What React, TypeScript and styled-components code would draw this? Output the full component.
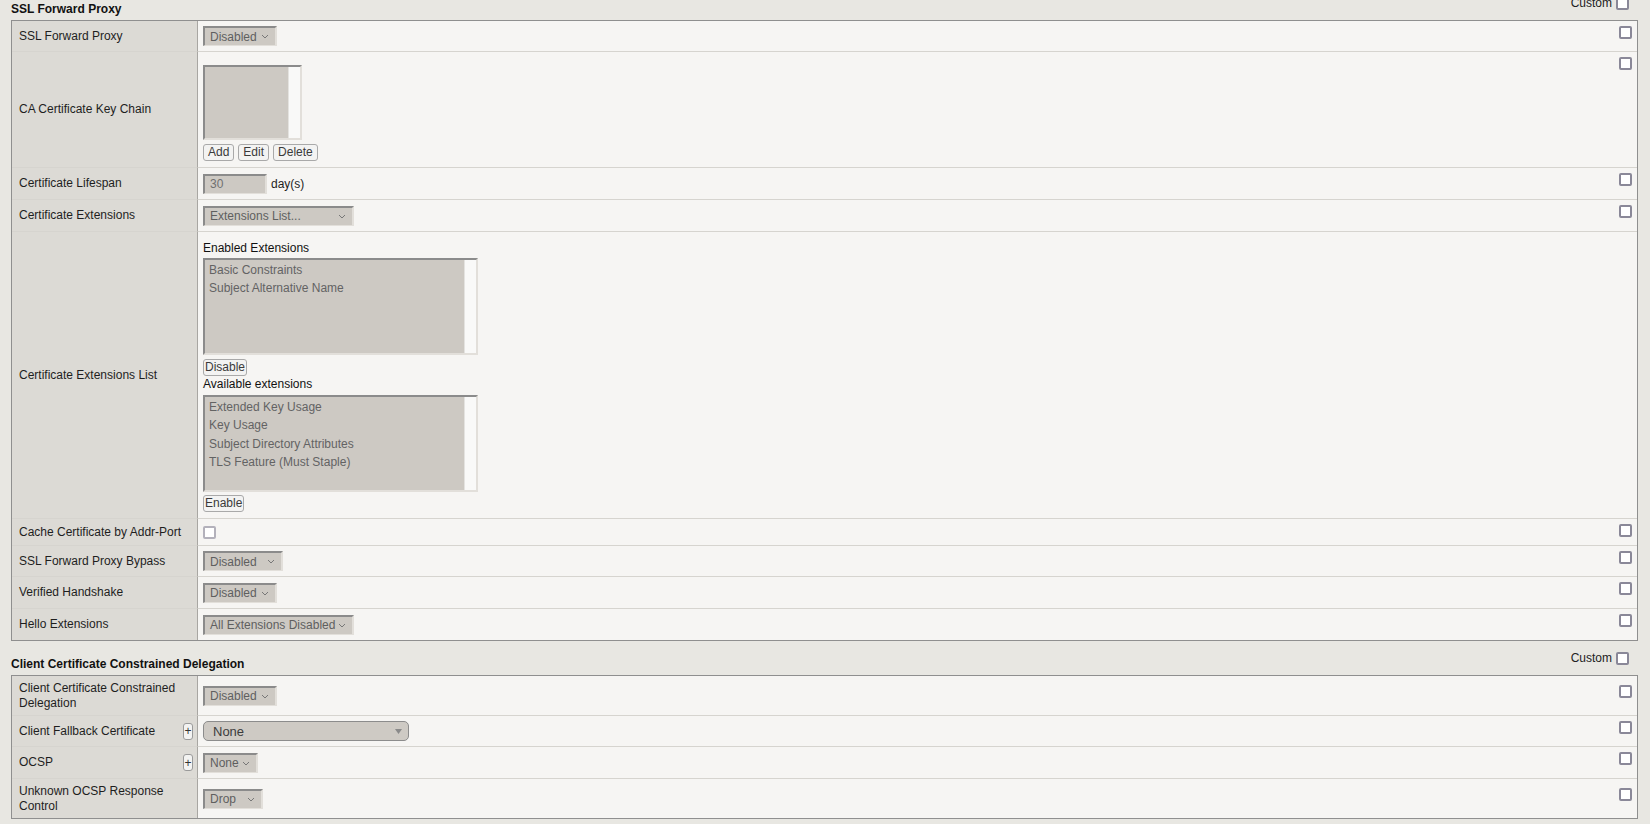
import React from "react";
import styled, { createGlobalStyle } from "styled-components";

const Global = createGlobalStyle`
  html, body { margin: 0; padding: 0; background: #e8e7e2; }
  body {
    font-family: "Liberation Sans", Arial, sans-serif;
    font-size: 12px;
    color: #1e1e1e;
    overflow: hidden;
  }
  * { box-sizing: border-box; }
`;

const Page = styled.div`
  padding: 0 12px 0 11px;
`;

const SectionHeader = styled.div<{ $first?: boolean }>`
  display: flex;
  justify-content: space-between;
  height: 34px;
  margin-top: ${(p) => (p.$first ? "-14px" : "0")};
`;

const SectionTitle = styled.h2`
  margin: 0 0 4px 0;
  align-self: flex-end;
  font-size: 12px;
  font-weight: bold;
  line-height: 14px;
  color: #111;
`;

const CustomToggle = styled.label`
  display: flex;
  align-items: center;
  gap: 4px;
  height: 14px;
  margin: 10px 9px 0 0;
  color: #222;
  line-height: 14px;
`;

const Table = styled.table`
  width: 100%;
  border-collapse: separate;
  border-spacing: 0;
  table-layout: fixed;
  border: 1px solid #8f8f8f;
  background: #f6f5f3;
`;

const Row = styled.tr<{ $h: number }>`
  height: ${(p) => p.$h}px;
  &:not(:first-child) > td {
    border-top: 1px solid #d6d4cf;
  }
`;

const LabelCell = styled.td`
  width: 186px;
  padding: 0 4px 0 7px;
  background: #dcdad5;
  border-right: 1px solid #a8a6a2;
  vertical-align: middle;
  line-height: 14.5px;
  color: #1e1e1e;
`;

const LabelInner = styled.div`
  display: flex;
  align-items: center;
  justify-content: space-between;
`;

const ValueCell = styled.td<{ $top?: number }>`
  padding: ${(p) => (p.$top !== undefined ? `${p.$top}px` : "0")} 5px 0 5px;
  vertical-align: ${(p) => (p.$top !== undefined ? "top" : "middle")};
`;

const CheckCell = styled.td<{ $tall?: boolean }>`
  width: 30px;
  padding: ${(p) => (p.$tall ? "9px" : "5px")} 5px 0 0;
  vertical-align: top;
`;

const CheckBox = styled.input.attrs({ type: "checkbox" })<{ $light?: boolean }>`
  appearance: none;
  display: block;
  width: 13px;
  height: 13px;
  margin: 0 0 0 ${(p) => (p.$light ? "0" : "auto")};
  border: 2px solid ${(p) => (p.$light ? "#b3b1bb" : "#8a8898")};
  border-radius: 2px;
  background: #fff;
`;

const Select = styled.div<{ $w: number }>`
  display: inline-flex;
  align-items: center;
  justify-content: space-between;
  width: ${(p) => p.$w}px;
  height: 20px;
  padding: 0 6px 0 5px;
  background: #cdc9c3;
  color: #5f5f5f;
  border-style: solid;
  border-width: 2px 2px 1px 2px;
  border-color: #8b8b8b #e2dfda #e2dfda #8b8b8b;
  vertical-align: middle;
  line-height: 16px;
  white-space: nowrap;
`;

const RoundSelect = styled.div`
  display: inline-flex;
  align-items: center;
  justify-content: space-between;
  width: 206px;
  height: 20px;
  padding: 0 6px 0 9px;
  background: #cecac4;
  border: 1px solid #8c8c8c;
  border-radius: 5px;
  color: #3c3c3c;
  font-size: 13px;
  vertical-align: middle;
`;

const TextInput = styled.div`
  display: inline-flex;
  align-items: center;
  width: 64px;
  height: 20px;
  padding-left: 5px;
  background: #cdc9c3;
  color: #707070;
  border-style: solid;
  border-width: 2px 2px 1px 2px;
  border-color: #8b8b8b #e2dfda #e2dfda #8b8b8b;
`;

const InlineGroup = styled.div`
  display: flex;
  align-items: center;
  gap: 4px;
`;

const ListBox = styled.div<{ $w: number; $h: number }>`
  display: flex;
  width: ${(p) => p.$w}px;
  height: ${(p) => p.$h}px;
  border-style: solid;
  border-width: 2px;
  border-color: #8b8b8b #e2dfda #e2dfda #8b8b8b;
  background: #cdc9c3;
`;

const ListOptions = styled.ul`
  flex: 1;
  margin: 0;
  padding: 1px 4px 0 4px;
  list-style: none;
  color: #636363;
`;

const ListOption = styled.li`
  line-height: 18.3px;
  white-space: nowrap;
`;

const ScrollTrack = styled.div`
  width: 12px;
  background: #f9f9f8;
  border-left: 1px solid #e4e3e0;
`;

const ButtonRow = styled.div<{ $mt: number }>`
  display: flex;
  gap: 4px;
  margin-top: ${(p) => p.$mt}px;
`;

const Btn = styled.button<{ $pad?: number }>`
  height: 17px;
  padding: 0 ${(p) => p.$pad ?? 4}px;
  font-family: "Liberation Sans", Arial, sans-serif;
  font-size: 12px;
  line-height: 15px;
  color: #3a3a3a;
  background: #f3f3f2;
  border: 1px solid #a9a9a9;
  border-radius: 3px;
`;

const PlusBtn = styled.button`
  width: 10px;
  height: 17px;
  padding: 0;
  font-family: "Liberation Sans", Arial, sans-serif;
  font-size: 12px;
  line-height: 14px;
  color: #333;
  background: #f3f3f2;
  border: 1px solid #9a9a9a;
  border-radius: 3px;
  flex-shrink: 0;
`;

const FieldCaption = styled.div<{ $mt?: number }>`
  line-height: 14px;
  color: #111;
  margin-top: ${(p) => p.$mt ?? 0}px;
`;

const ListWrap = styled.div<{ $mt: number }>`
  margin-top: ${(p) => p.$mt}px;
`;

const Chevron = () => (
  <svg width="8" height="5" viewBox="0 0 8 5">
    <polyline points="1,1 4,4 7,1" fill="none" stroke="#777" strokeWidth="1" />
  </svg>
);

const Triangle = () => (
  <svg width="7" height="5" viewBox="0 0 7 5">
    <polygon points="0,0 7,0 3.5,5" fill="#8a8a8a" />
  </svg>
);

const Sel = ({ w, children }: { w: number; children: React.ReactNode }) => (
  <Select $w={w}>
    <span>{children}</span>
    <Chevron />
  </Select>
);

const List = ({ w, h, items }: { w: number; h: number; items: string[] }) => (
  <ListBox $w={w} $h={h}>
    <ListOptions>
      {items.map((it) => (
        <ListOption key={it}>{it}</ListOption>
      ))}
    </ListOptions>
    <ScrollTrack />
  </ListBox>
);

export default function App() {
  return (
    <>
      <Global />
      <Page>
        <SectionHeader $first>
          <SectionTitle>SSL Forward Proxy</SectionTitle>
          <CustomToggle>
            Custom <CheckBox />
          </CustomToggle>
        </SectionHeader>
        <Table>
          <tbody>
            <Row $h={30}>
              <LabelCell>SSL Forward Proxy</LabelCell>
              <ValueCell>
                <Sel w={74}>Disabled</Sel>
              </ValueCell>
              <CheckCell>
                <CheckBox />
              </CheckCell>
            </Row>
            <Row $h={116}>
              <LabelCell>CA Certificate Key Chain</LabelCell>
              <ValueCell $top={13}>
                <List w={99} h={75} items={[]} />
                <ButtonRow $mt={4}>
                  <Btn>Add</Btn>
                  <Btn>Edit</Btn>
                  <Btn>Delete</Btn>
                </ButtonRow>
              </ValueCell>
              <CheckCell>
                <CheckBox />
              </CheckCell>
            </Row>
            <Row $h={32}>
              <LabelCell>Certificate Lifespan</LabelCell>
              <ValueCell>
                <InlineGroup>
                  <TextInput>30</TextInput>
                  <span>day(s)</span>
                </InlineGroup>
              </ValueCell>
              <CheckCell>
                <CheckBox />
              </CheckCell>
            </Row>
            <Row $h={32}>
              <LabelCell>Certificate Extensions</LabelCell>
              <ValueCell>
                <Sel w={151}>Extensions List...</Sel>
              </ValueCell>
              <CheckCell>
                <CheckBox />
              </CheckCell>
            </Row>
            <Row $h={287}>
              <LabelCell>Certificate Extensions List</LabelCell>
              <ValueCell $top={9}>
                <FieldCaption>Enabled Extensions</FieldCaption>
                <ListWrap $mt={3}>
                  <List w={275} h={97} items={["Basic Constraints", "Subject Alternative Name"]} />
                </ListWrap>
                <ButtonRow $mt={4}>
                  <Btn $pad={1}>Disable</Btn>
                </ButtonRow>
                <FieldCaption $mt={1}>Available extensions</FieldCaption>
                <ListWrap $mt={4}>
                  <List
                    w={275}
                    h={97}
                    items={[
                      "Extended Key Usage",
                      "Key Usage",
                      "Subject Directory Attributes",
                      "TLS Feature (Must Staple)",
                    ]}
                  />
                </ListWrap>
                <ButtonRow $mt={3}>
                  <Btn $pad={1}>Enable</Btn>
                </ButtonRow>
              </ValueCell>
              <CheckCell />
            </Row>
            <Row $h={27}>
              <LabelCell>Cache Certificate by Addr-Port</LabelCell>
              <ValueCell>
                <CheckBox $light />
              </ValueCell>
              <CheckCell>
                <CheckBox />
              </CheckCell>
            </Row>
            <Row $h={31}>
              <LabelCell>SSL Forward Proxy Bypass</LabelCell>
              <ValueCell>
                <Sel w={80}>Disabled</Sel>
              </ValueCell>
              <CheckCell>
                <CheckBox />
              </CheckCell>
            </Row>
            <Row $h={32}>
              <LabelCell>Verified Handshake</LabelCell>
              <ValueCell>
                <Sel w={74}>Disabled</Sel>
              </ValueCell>
              <CheckCell>
                <CheckBox />
              </CheckCell>
            </Row>
            <Row $h={32}>
              <LabelCell>Hello Extensions</LabelCell>
              <ValueCell>
                <Sel w={151}>All Extensions Disabled</Sel>
              </ValueCell>
              <CheckCell>
                <CheckBox />
              </CheckCell>
            </Row>
          </tbody>
        </Table>

        <SectionHeader>
          <SectionTitle>Client Certificate Constrained Delegation</SectionTitle>
          <CustomToggle>
            Custom <CheckBox />
          </CustomToggle>
        </SectionHeader>
        <Table>
          <tbody>
            <Row $h={39}>
              <LabelCell>Client Certificate Constrained Delegation</LabelCell>
              <ValueCell>
                <Sel w={74}>Disabled</Sel>
              </ValueCell>
              <CheckCell $tall>
                <CheckBox />
              </CheckCell>
            </Row>
            <Row $h={31}>
              <LabelCell>
                <LabelInner>
                  <span>Client Fallback Certificate</span>
                  <PlusBtn>+</PlusBtn>
                </LabelInner>
              </LabelCell>
              <ValueCell>
                <RoundSelect>
                  <span>None</span>
                  <Triangle />
                </RoundSelect>
              </ValueCell>
              <CheckCell>
                <CheckBox />
              </CheckCell>
            </Row>
            <Row $h={32}>
              <LabelCell>
                <LabelInner>
                  <span>OCSP</span>
                  <PlusBtn>+</PlusBtn>
                </LabelInner>
              </LabelCell>
              <ValueCell>
                <Sel w={55}>None</Sel>
              </ValueCell>
              <CheckCell>
                <CheckBox />
              </CheckCell>
            </Row>
            <Row $h={40}>
              <LabelCell>Unknown OCSP Response Control</LabelCell>
              <ValueCell>
                <Sel w={60}>Drop</Sel>
              </ValueCell>
              <CheckCell $tall>
                <CheckBox />
              </CheckCell>
            </Row>
          </tbody>
        </Table>
      </Page>
    </>
  );
}
